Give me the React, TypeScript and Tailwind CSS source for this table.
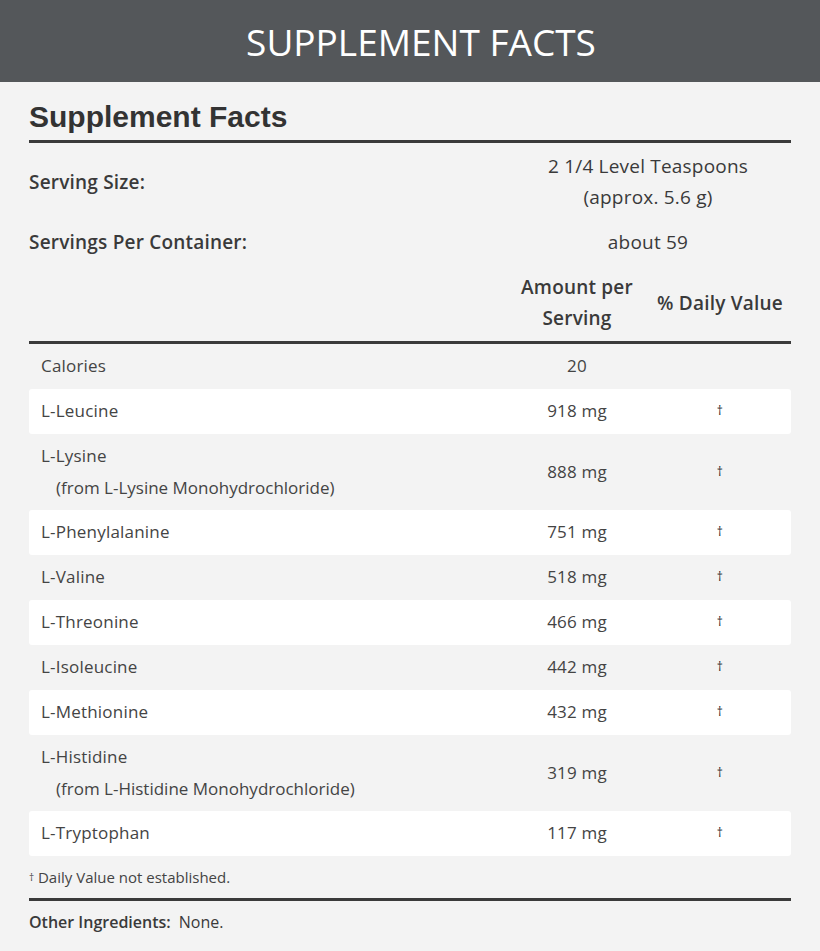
import React from "react";

type Row = { name: string; sub?: string; amount: string; dv?: boolean; white?: boolean };

const rows: Row[] = [
  { name: "L-Leucine", amount: "918 mg", dv: true, white: true },
  { name: "L-Lysine", sub: "(from L-Lysine Monohydrochloride)", amount: "888 mg", dv: true },
  { name: "L-Phenylalanine", amount: "751 mg", dv: true, white: true },
  { name: "L-Valine", amount: "518 mg", dv: true },
  { name: "L-Threonine", amount: "466 mg", dv: true, white: true },
  { name: "L-Isoleucine", amount: "442 mg", dv: true },
  { name: "L-Methionine", amount: "432 mg", dv: true, white: true },
  { name: "L-Histidine", sub: "(from L-Histidine Monohydrochloride)", amount: "319 mg", dv: true },
  { name: "L-Tryptophan", amount: "117 mg", dv: true, white: true },
];

const body = { fontFamily: '"Open Sans", "Noto Sans", sans-serif' };

export default function App() {
  return (
    <div className="w-[820px] h-[951px] bg-[#f3f3f3] text-[#3a3a3a] overflow-hidden" style={body}>
      <div className="h-[82px] bg-[#54575a] flex items-center justify-center pl-[22px]">
        <h1 className="text-white text-[37px] font-normal tracking-[0px] leading-none pt-[1px]">SUPPLEMENT FACTS</h1>
      </div>
      <div className="px-[29px]">
        <h2
          className="mt-[18px] text-[30px] font-bold leading-[34px] text-[#333]"
          style={{ fontFamily: '"Liberation Sans", Arial, sans-serif' }}
        >
          Supplement Facts
        </h2>
        <div className="mt-[6px] h-[3px] bg-[#3a3a3a]" />

        <div className="grid grid-cols-[476px_286px] text-[19px] tracking-[0.2px]">
          <div className="flex items-center font-semibold leading-[31px] pt-[8px]">Serving Size:</div>
          <div className="text-center leading-[31px] pt-[8px]">
            2 1/4 Level Teaspoons
            <br />
            (approx. 5.6 g)
          </div>
          <div className="font-semibold leading-[31px] pt-[14px]">Servings Per Container:</div>
          <div className="text-center leading-[31px] pt-[14px]">about 59</div>
        </div>

        <div className="grid grid-cols-[476px_144px_142px] mt-[14px] pb-[7px] text-[19px] tracking-[0.2px]">
          <div />
          <div className="text-center font-semibold leading-[31px]">
            Amount per
            <br />
            Serving
          </div>
          <div className="flex items-center justify-center font-semibold whitespace-nowrap">% Daily Value</div>
        </div>
        <div className="h-[3px] bg-[#3a3a3a]" />

        <div className="grid grid-cols-[476px_144px_142px] h-[45px] items-center text-[17px] tracking-[0.2px] text-[#444] pb-[1px]">
          <div className="pl-[12px]">Calories</div>
          <div className="text-center">20</div>
          <div />
        </div>

        {rows.map((r) => (
          <div
            key={r.name}
            className={`grid grid-cols-[476px_144px_142px] items-center text-[17px] tracking-[0.2px] text-[#444] rounded-[3px] pb-[1px] ${
              r.sub ? "h-[76px]" : "h-[45px]"
            } ${r.white ? "bg-white" : ""}`}
          >
            <div className="pl-[12px] leading-[32px]">
              <div>{r.name}</div>
              {r.sub && <div className="pl-[15px] tracking-normal">{r.sub}</div>}
            </div>
            <div className="text-center">{r.amount}</div>
            <div className="text-center text-[12px] text-[#222]">{r.dv ? "†" : ""}</div>
          </div>
        ))}

        <div className="mt-[11px] text-[15px] leading-[20px] text-[#444]">
          <span className="text-[10px] align-top">†</span> Daily Value not established.
        </div>
        <div className="mt-[11px] h-[3px] bg-[#3a3a3a]" />
        <div className="mt-[11px] text-[16px] leading-[20px]">
          <span className="font-semibold">Other Ingredients:</span>
          <span className="ml-[8px]">None.</span>
        </div>
      </div>
    </div>
  );
}
